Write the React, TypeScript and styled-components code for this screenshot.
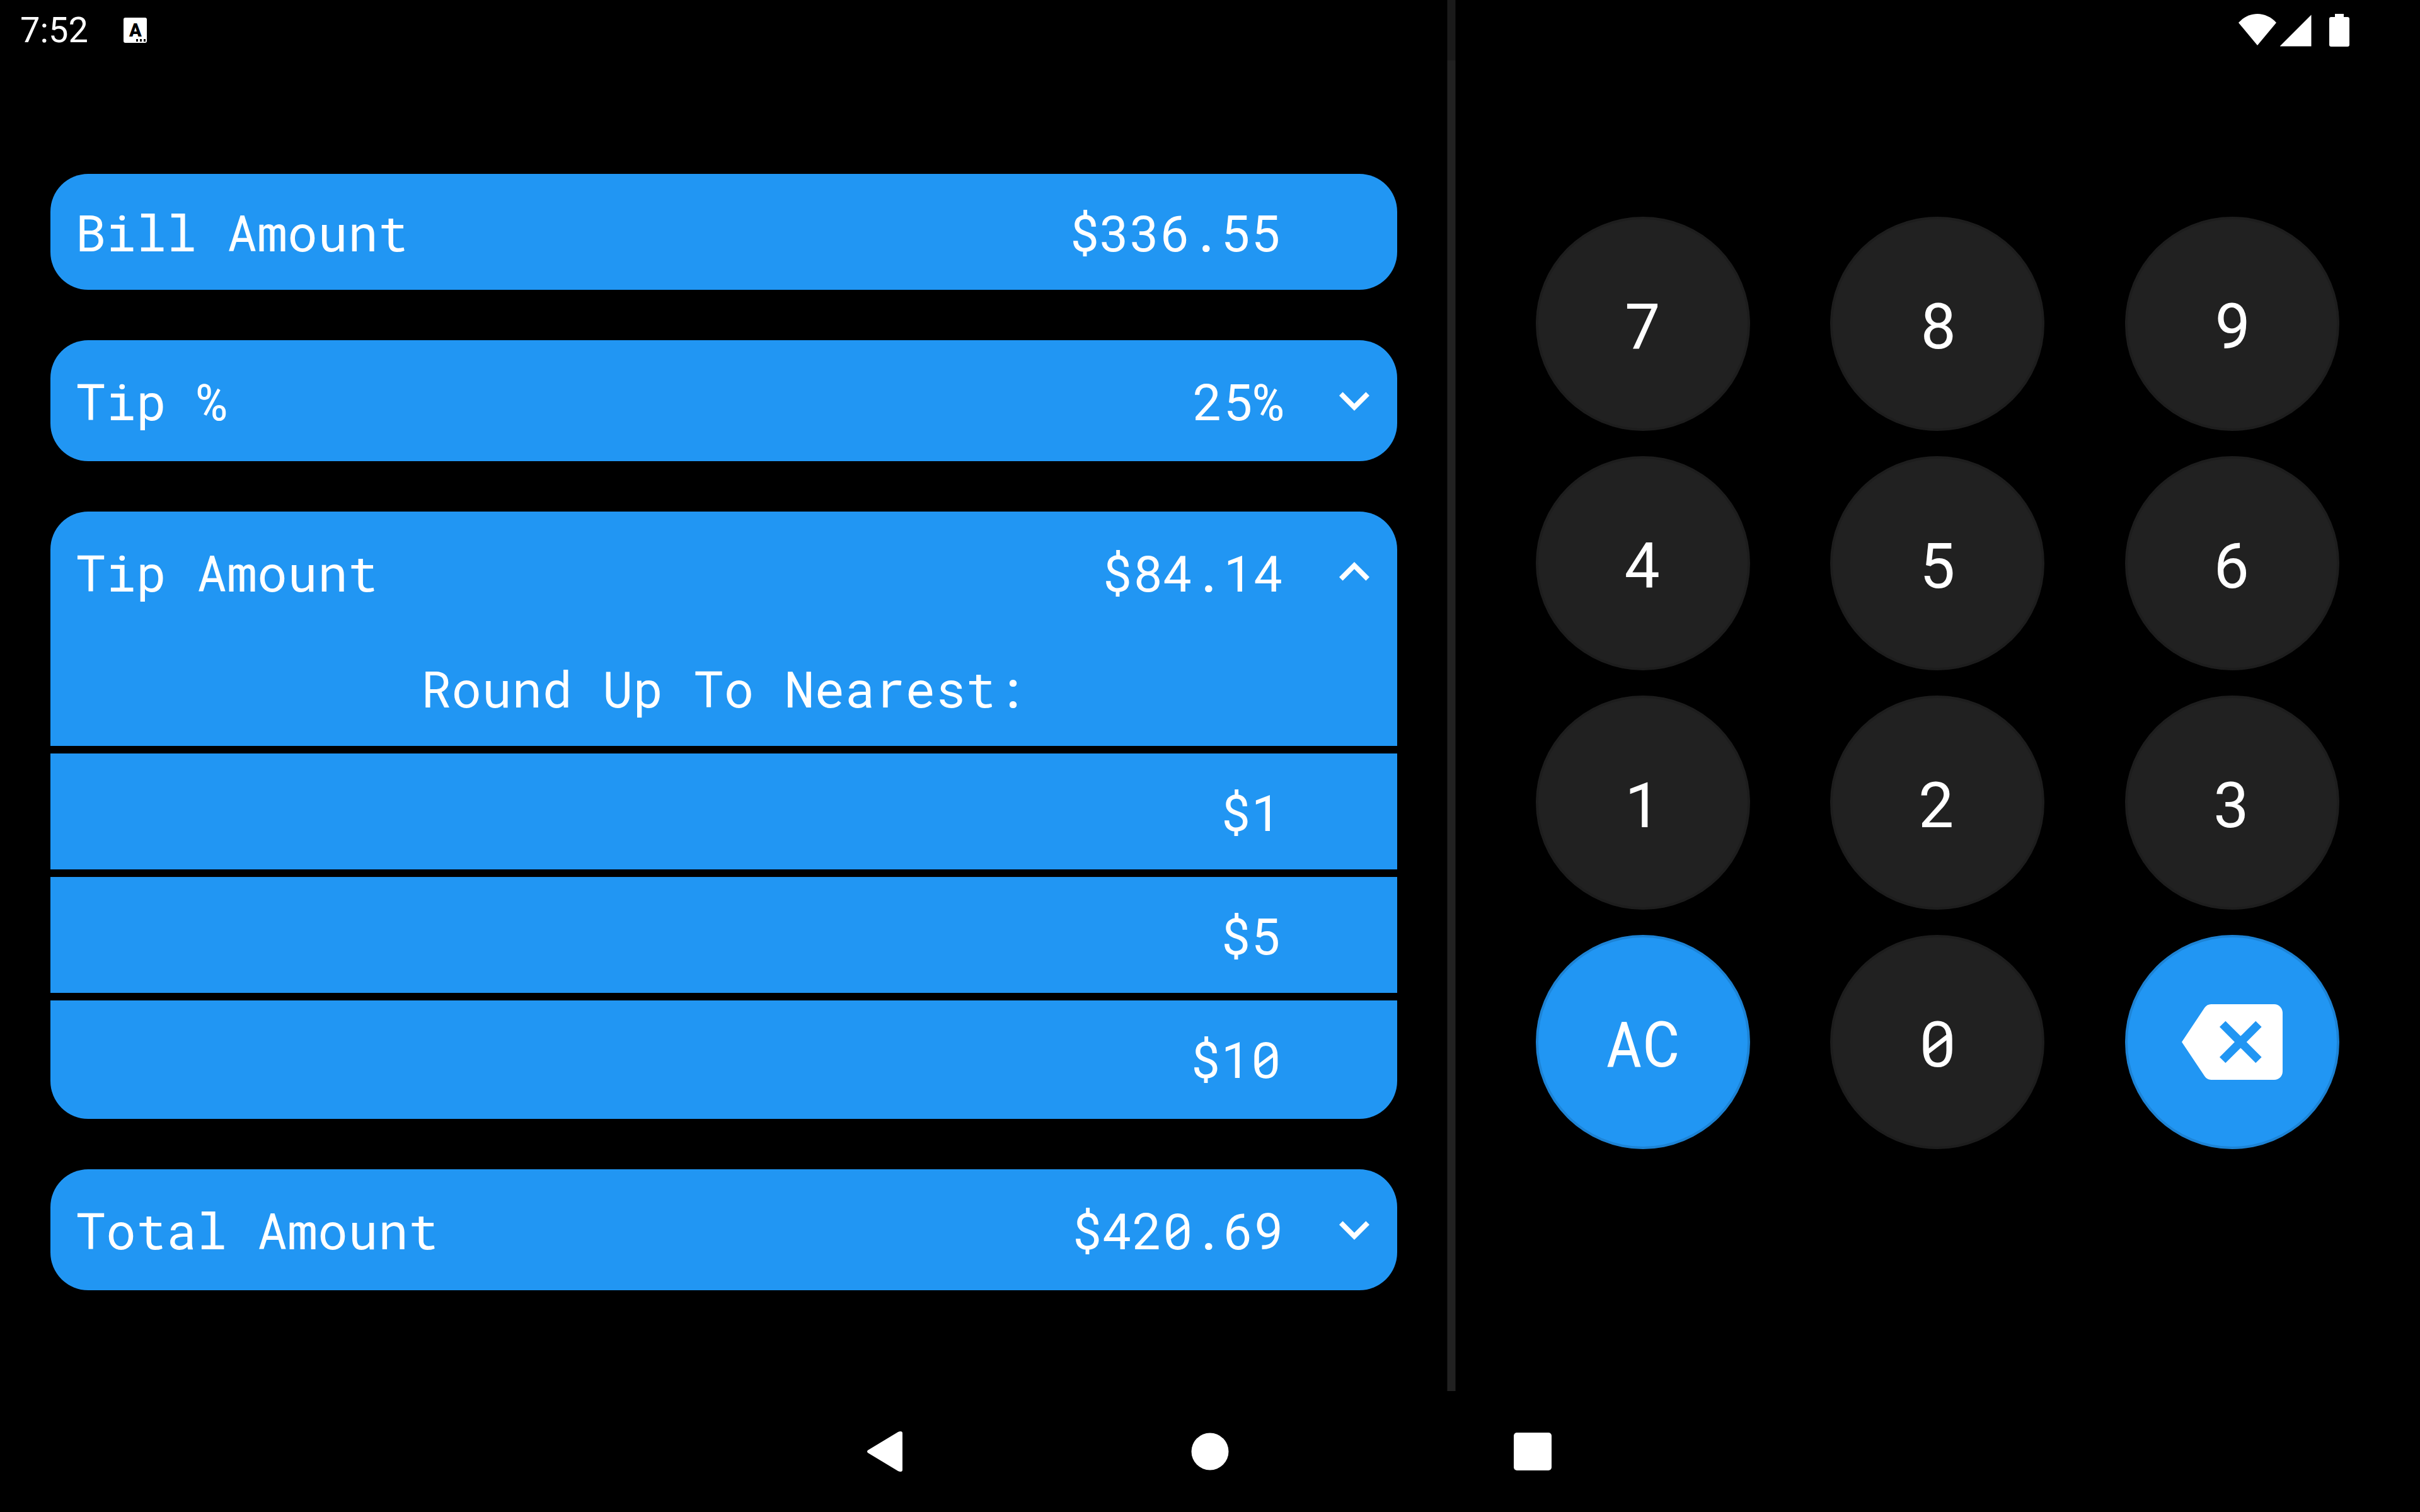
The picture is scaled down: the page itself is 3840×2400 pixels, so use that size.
import React, { useState } from "react";
import styled, { createGlobalStyle, css } from "styled-components";

const BLUE = "#2196f3";
const GREY = "#212121";

const GlobalStyle = createGlobalStyle`
  *, *::before, *::after { box-sizing: border-box; }
  body { margin: 0; background: #000; color: #fff; }
  button { font: inherit; color: inherit; border: 0; margin: 0; padding: 0; background: none; cursor: pointer; }
  svg { display: block; }
`;

const Screen = styled.div`
  position: relative;
  display: flex;
  flex-direction: column;
  min-height: 100vh;
  background: #000;
  font-family: "Roboto Mono", "DejaVu Sans Mono", monospace;
  font-size: 80px;
  line-height: 104px;
`;

const StatusBar = styled.header`
  position: absolute;
  inset: 0 0 auto 0;
  display: flex;
  align-items: center;
  justify-content: space-between;
  height: 96px;
  padding: 0 112px 0 32px;
  background: rgba(0, 0, 0, 0.2);
  font-family: Roboto, sans-serif;
  font-size: 56px;
  line-height: 64px;
`;

const Clock = styled.div`
  display: flex;
  align-items: center;
  gap: 56px;
`;

const StatusIcons = styled.div`
  display: flex;
  align-items: center;
  svg + svg { margin-left: 6px; }
  svg + svg + svg { margin-left: 28px; }
`;

const Panels = styled.main`
  flex: 1;
  display: grid;
  grid-template-columns: minmax(0, 3fr) 12px minmax(0, 2fr);
`;

const Amounts = styled.section`
  display: flex;
  flex-direction: column;
  justify-content: center;
  gap: 80px;
  padding: 116px 80px 0;
`;

const Divider = styled.div`
  background: ${GREY};
  box-shadow: 1px 0 0 #111, -1px 0 0 #111;
`;

const Keypad = styled.section`
  display: grid;
  grid-template-columns: repeat(3, 340px);
  grid-auto-rows: 340px;
  row-gap: 40px;
  justify-content: space-evenly;
  align-content: center;
  padding-bottom: 40px;
`;

const Card = styled.div<{ $open?: boolean }>`
  overflow: hidden;
  border-radius: 60px;
  background: ${BLUE};
  padding-bottom: ${(p) => (p.$open ? 4 : 0)}px;
`;

const row = css`
  display: flex;
  align-items: center;
  width: 100%;
`;

const PlainRow = styled.div`
  ${row}
  justify-content: space-between;
  padding: 40px 184px 40px 40px;
`;

const ToggleRow = styled.button<{ $open: boolean }>`
  ${row}
  padding: 48px 20px ${(p) => (p.$open ? 44 : 48)}px 40px;
  height: ${(p) => (p.$open ? 188 : 192)}px;
  text-align: left;
`;

const Value = styled.span`
  margin-left: auto;
  margin-right: 64px;
`;

const RoundTitle = styled.div`
  padding: 40px;
  text-align: center;
`;

const OptionList = styled.ul`
  margin: 0;
  padding: 0;
  list-style: none;
`;

const Option = styled.li`
  border-top: 12px solid #000;
`;

const OptionButton = styled.button`
  ${row}
  justify-content: flex-end;
  padding: 40px 184px 40px 40px;
`;

const Key = styled.button<{ $accent?: boolean }>`
  display: flex;
  align-items: center;
  justify-content: center;
  border-radius: 50%;
  background: ${(p) => (p.$accent ? BLUE : GREY)};
  box-shadow: inset 0 0 0 4px rgba(0, 0, 0, 0.12);
  font-size: 100px;
  line-height: 132px;
`;

const NavBar = styled.nav`
  display: flex;
  justify-content: center;
  gap: 256px;
  height: 192px;
`;

const NavButton = styled.button`
  display: flex;
  align-items: center;
  justify-content: center;
  width: 256px;
`;

const Chevron = ({ up }: { up: boolean }) => (
  <svg width="96" height="96" viewBox="0 0 24 24" fill="#fff" aria-hidden="true">
    <path
      d={
        up
          ? "M12 8l-6 6 1.41 1.41L12 10.83l4.59 4.58L18 14z"
          : "M16.59 8.59L12 13.17 7.41 8.59 6 10l6 6 6-6z"
      }
    />
  </svg>
);

const KeyboardIcon = () => (
  <svg width="37" height="40" viewBox="0 0 37 40" aria-hidden="true">
    <rect width="37" height="40" rx="3" fill="#fff" />
    <text x="19" y="30" textAnchor="middle" fontFamily="Roboto, sans-serif" fontSize="29" fontWeight="900" fill="#000">
      A
    </text>
    <path d="M20 34h3v4h-3zM26 34h3v4h-3zM32 34h3v4h-3z" fill="#000" />
  </svg>
);

const WifiIcon = () => (
  <svg width="60" height="52" viewBox="0 0 60 52" fill="#fff" aria-hidden="true">
    <path d="M30 50L0 14C8 5 19 0 30 0s22 5 30 14z" />
  </svg>
);

const SignalIcon = () => (
  <svg width="50" height="52" viewBox="0 0 50 52" fill="#fff" aria-hidden="true">
    <path d="M0 51.5V51L49.5 1.5v50z" />
  </svg>
);

const BatteryIcon = () => (
  <svg width="32" height="52" viewBox="0 0 32 52" fill="#fff" aria-hidden="true">
    <path d="M9 0h14v5h6q3 0 3 3v41q0 3-3 3H3q-3 0-3-3V8q0-3 3-3h6z" />
  </svg>
);

const BackspaceIcon = () => (
  <svg width="160" height="160" viewBox="0 0 24 24" fill="#fff" aria-hidden="true">
    <path d="M22 3H7c-.69 0-1.23.35-1.59.88L0 12l5.41 8.11c.36.53.9.89 1.59.89h15c1.1 0 2-.9 2-2V5c0-1.1-.9-2-2-2zm-3 12.59L17.59 17 14 13.41 10.41 17 9 15.59 12.59 12 9 8.41 10.41 7 14 10.59 17.59 7 19 8.41 15.41 12 19 15.59z" />
  </svg>
);

const money = (cents: number) => "$" + (cents / 100).toFixed(2);

type Section = "percent" | "tip" | "total";

interface ToggleProps {
  label: string;
  value: string;
  open: boolean;
  onToggle: () => void;
  children?: React.ReactNode;
}

const ToggleCard = ({ label, value, open, onToggle, children }: ToggleProps) => (
  <Card $open={open}>
    <ToggleRow $open={open} aria-expanded={open} onClick={onToggle}>
      <span>{label}</span>
      <Value>{value}</Value>
      <Chevron up={open} />
    </ToggleRow>
    {open && children}
  </Card>
);

interface OptionsProps {
  values: number[];
  format: (n: number) => string;
  onPick: (n: number) => void;
}

const Options = ({ values, format, onPick }: OptionsProps) => (
  <OptionList>
    {values.map((n) => (
      <Option key={n}>
        <OptionButton onClick={() => onPick(n)}>{format(n)}</OptionButton>
      </Option>
    ))}
  </OptionList>
);

const STEPS = [1, 5, 10];
const DIGITS = [7, 8, 9, 4, 5, 6, 1, 2, 3];

export default function App() {
  const [bill, setBill] = useState(33655);
  const [percent, setPercent] = useState(25);
  const [roundedTip, setRoundedTip] = useState<number | null>(null);
  const [open, setOpen] = useState<Section | null>("tip");

  const tip = roundedTip ?? Math.round((bill * percent) / 100);
  const total = bill + tip;
  const toggle = (s: Section) => () => setOpen(open === s ? null : s);
  const changeBill = (next: number) => {
    setRoundedTip(null);
    setBill(next);
  };
  const roundUp = (cents: number, step: number) => Math.ceil(cents / (step * 100)) * step * 100;

  return (
    <Screen>
      <GlobalStyle />
      <Panels>
        <Amounts aria-label="Amounts">
          <Card>
            <PlainRow>
              <span>Bill Amount</span>
              <span>{money(bill)}</span>
            </PlainRow>
          </Card>
          <ToggleCard label="Tip %" value={percent + "%"} open={open === "percent"} onToggle={toggle("percent")}>
            <Options
              values={[15, 20, 25]}
              format={(n) => n + "%"}
              onPick={(n) => {
                setRoundedTip(null);
                setPercent(n);
              }}
            />
          </ToggleCard>
          <ToggleCard label="Tip Amount" value={money(tip)} open={open === "tip"} onToggle={toggle("tip")}>
            <RoundTitle>Round Up To Nearest:</RoundTitle>
            <Options values={STEPS} format={(n) => "$" + n} onPick={(n) => setRoundedTip(roundUp(tip, n))} />
          </ToggleCard>
          <ToggleCard label="Total Amount" value={money(total)} open={open === "total"} onToggle={toggle("total")}>
            <RoundTitle>Round Up To Nearest:</RoundTitle>
            <Options values={STEPS} format={(n) => "$" + n} onPick={(n) => setRoundedTip(roundUp(total, n) - bill)} />
          </ToggleCard>
        </Amounts>
        <Divider />
        <Keypad aria-label="Keypad">
          {DIGITS.map((d) => (
            <Key key={d} onClick={() => changeBill(bill * 10 + d)}>
              {d}
            </Key>
          ))}
          <Key $accent onClick={() => changeBill(0)}>
            AC
          </Key>
          <Key onClick={() => changeBill(bill * 10)}>0</Key>
          <Key $accent aria-label="Backspace" onClick={() => changeBill(Math.floor(bill / 10))}>
            <BackspaceIcon />
          </Key>
        </Keypad>
      </Panels>
      <NavBar aria-label="System navigation">
        <NavButton aria-label="Back">
          <svg width="64" height="64" viewBox="0 0 64 64" fill="#fff" aria-hidden="true">
            <path d="M1 34q-2-2 0-4L49 1q2-1 4-1 3 0 3 3v58q0 3-3 3-2 0-4-1z" />
          </svg>
        </NavButton>
        <NavButton aria-label="Home">
          <svg width="60" height="60" viewBox="0 0 60 60" fill="#fff" aria-hidden="true">
            <circle cx="30" cy="30" r="29.5" />
          </svg>
        </NavButton>
        <NavButton aria-label="Recent apps">
          <svg width="60" height="60" viewBox="0 0 60 60" fill="#fff" aria-hidden="true">
            <rect width="60" height="60" rx="5" />
          </svg>
        </NavButton>
      </NavBar>
      <StatusBar>
        <Clock>
          <span>7:52</span>
          <KeyboardIcon />
        </Clock>
        <StatusIcons>
          <WifiIcon />
          <SignalIcon />
          <BatteryIcon />
        </StatusIcons>
      </StatusBar>
    </Screen>
  );
}
